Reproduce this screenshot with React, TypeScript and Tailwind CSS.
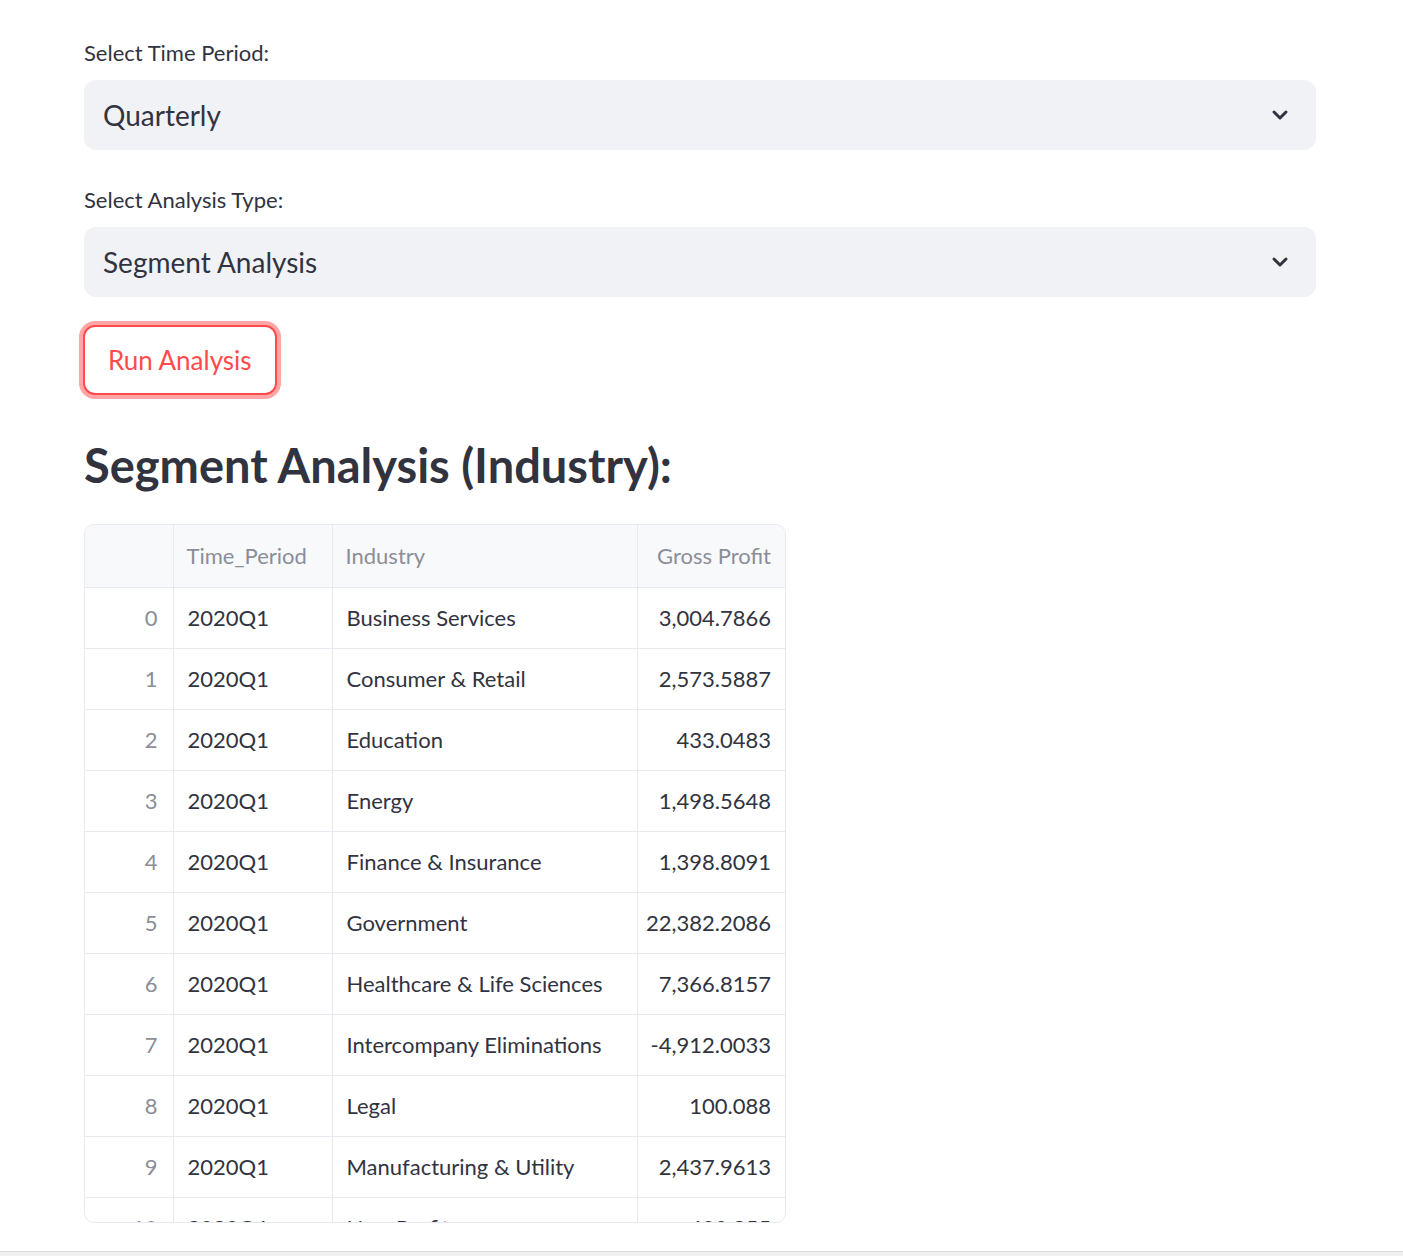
import { ChevronDown } from "lucide-react";

const rows = [
  ["2020Q1", "Business Services", "3,004.7866"],
  ["2020Q1", "Consumer & Retail", "2,573.5887"],
  ["2020Q1", "Education", "433.0483"],
  ["2020Q1", "Energy", "1,498.5648"],
  ["2020Q1", "Finance & Insurance", "1,398.8091"],
  ["2020Q1", "Government", "22,382.2086"],
  ["2020Q1", "Healthcare & Life Sciences", "7,366.8157"],
  ["2020Q1", "Intercompany Eliminations", "-4,912.0033"],
  ["2020Q1", "Legal", "100.088"],
  ["2020Q1", "Manufacturing & Utility", "2,437.9613"],
  ["2020Q1", "Non-Profit", "400.355"],
];

function Select({ label, value }: { label: string; value: string }) {
  return (
    <div className="flex flex-col">
      <label className="text-[22px] leading-[28px] text-[#31333f]">{label}</label>
      <div className="mt-[13px] flex h-[70px] items-center justify-between rounded-[12px] bg-[#f0f2f6] pl-[19px] pr-[24px]">
        <span className="text-[28px] text-[#31333f]">{value}</span>
        <ChevronDown className="h-[24px] w-[24px] text-[#31333f]" strokeWidth={3} />
      </div>
    </div>
  );
}

export default function App() {
  return (
    <div className="relative h-[1256px] overflow-hidden bg-white font-['Lato','Noto_Sans',sans-serif] text-[#31333f]">
      <div className="box-content w-[1232px] pl-[84px] pt-[39px]">
        <div className="flex flex-col gap-[36px]">
          <Select label="Select Time Period:" value="Quarterly" />
          <Select label="Select Analysis Type:" value="Segment Analysis" />
        </div>

        <button className="mt-[28px] ml-[-1px] h-[70px] rounded-[12px] border-2 border-[#ff4b4b] bg-white px-[23px] text-[26px] leading-[34px] text-[#ff4b4b] shadow-[0_0_0_4px_rgba(255,75,75,0.5)]">
          Run Analysis
        </button>

        <h2 className="mt-[38px] text-[47px] font-bold leading-[64px] text-[#31333f]">
          Segment Analysis (Industry):
        </h2>

        <div className="mt-[27px] h-[699px] w-[702px] overflow-hidden rounded-[10px] border border-[#e6e9ef]">
          <table className="w-full table-fixed border-collapse text-[22px]">
            <colgroup>
              <col className="w-[88px]" />
              <col className="w-[159px]" />
              <col className="w-[305px]" />
              <col />
            </colgroup>
            <thead>
              <tr className="h-[62px] bg-[#f8f9fb] text-[#8b8d97]">
                <th className="border-b border-r border-[#e6e9ef]"></th>
                <th className="border-b border-r border-[#e6e9ef] px-[13px] text-left font-normal">Time_Period</th>
                <th className="border-b border-r border-[#e6e9ef] px-[13px] text-left font-normal">Industry</th>
                <th className="border-b border-[#e6e9ef] px-[14px] text-right font-normal">Gross Profit</th>
              </tr>
            </thead>
            <tbody>
              {rows.map((r, i) => (
                <tr key={i} className="h-[61px]">
                  <td className="border-b border-r border-[#e6e9ef] pr-[15px] text-right text-[#8b8d97]">{i}</td>
                  <td className="border-b border-r border-[#e6e9ef] px-[14px]">{r[0]}</td>
                  <td className="whitespace-nowrap border-b border-r border-[#e6e9ef] px-[14px]">{r[1]}</td>
                  <td className="whitespace-nowrap border-b border-[#e6e9ef] pl-[8px] pr-[14px] text-right">{r[2]}</td>
                </tr>
              ))}
            </tbody>
          </table>
        </div>
      </div>
      <div className="absolute bottom-0 left-0 h-[5px] w-full border-t border-[#dcdcdc] bg-[#f1f1f1]"></div>
    </div>
  );
}
